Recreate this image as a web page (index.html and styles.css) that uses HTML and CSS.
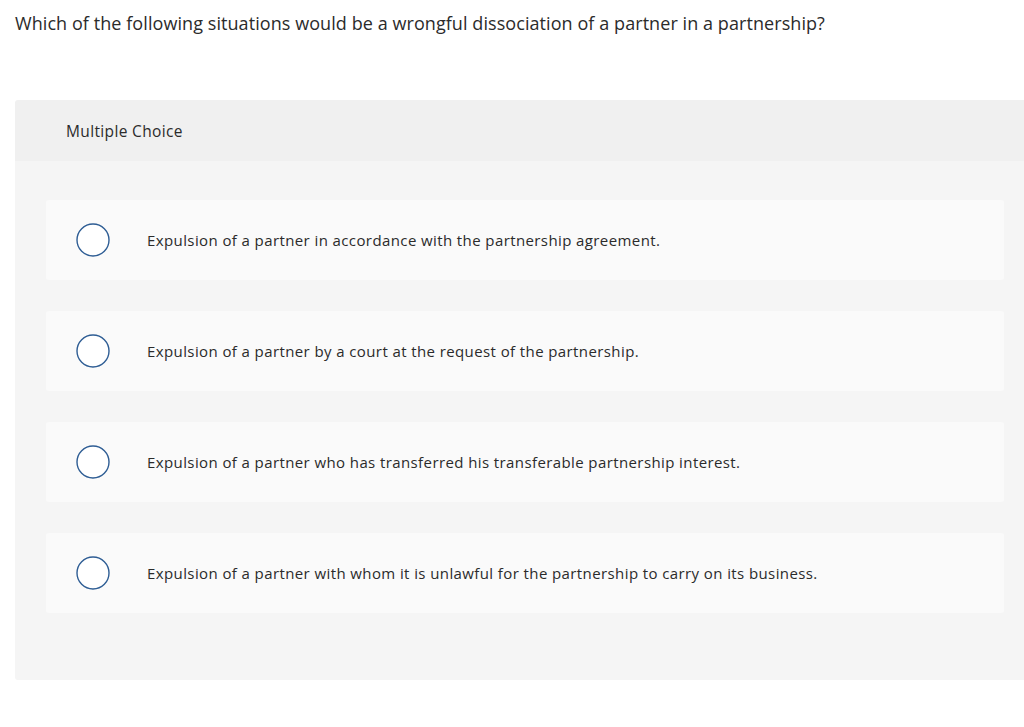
FILE: index.html
```html
<!DOCTYPE html>
<html>
<head>
<meta charset="utf-8">
<link rel="stylesheet" href="styles.css">
</head>
<body>
<div class="question">Which of the following situations would be a wrongful dissociation of a partner in a partnership?</div>
<div class="panel">
  <div class="panel-header">Multiple Choice</div>
  <div class="panel-body">
    <div class="option">
      <svg class="radio" width="34" height="34" viewBox="0 0 34 34"><circle cx="17" cy="17" r="16" fill="#fff" stroke="#2e5d94" stroke-width="1.4"/></svg>
      <span class="option-text">Expulsion of a partner in accordance with the partnership agreement.</span>
    </div>
    <div class="option">
      <svg class="radio" width="34" height="34" viewBox="0 0 34 34"><circle cx="17" cy="17" r="16" fill="#fff" stroke="#2e5d94" stroke-width="1.4"/></svg>
      <span class="option-text">Expulsion of a partner by a court at the request of the partnership.</span>
    </div>
    <div class="option">
      <svg class="radio" width="34" height="34" viewBox="0 0 34 34"><circle cx="17" cy="17" r="16" fill="#fff" stroke="#2e5d94" stroke-width="1.4"/></svg>
      <span class="option-text">Expulsion of a partner who has transferred his transferable partnership interest.</span>
    </div>
    <div class="option">
      <svg class="radio" width="34" height="34" viewBox="0 0 34 34"><circle cx="17" cy="17" r="16" fill="#fff" stroke="#2e5d94" stroke-width="1.4"/></svg>
      <span class="option-text">Expulsion of a partner with whom it is unlawful for the partnership to carry on its business.</span>
    </div>
  </div>
</div>
</body>
</html>
```
FILE: styles.css
```css
html, body {
  margin: 0;
  padding: 0;
  background: #fff;
}
body {
  font-family: "Open Sans", Lato, sans-serif;
  color: #2b2b2b;
  overflow: hidden;
}
.question {
  font-size: 18px;
  letter-spacing: 0.07px;
  line-height: 24px;
  padding: 11px 0 0 15px;
  height: 100px;
  box-sizing: border-box;
}
.panel {
  margin-left: 15px;
  width: 1020px;
  border-radius: 3px;
  overflow: hidden;
}
.panel-header {
  background: #f0f0f0;
  height: 61px;
  box-sizing: border-box;
  padding-left: 51px;
  display: flex;
  align-items: center;
  font-size: 15.5px;
  letter-spacing: 0.35px;
  padding-top: 1px;
}
.panel-body {
  background: #f5f5f5;
  padding: 39px 0 67px 31px;
  display: flex;
  flex-direction: column;
  gap: 31px;
}
.option {
  width: 958px;
  height: 80px;
  background: #fafafa;
  border-radius: 3px;
  display: flex;
  align-items: center;
  box-sizing: border-box;
  padding-left: 30px;
}
.radio {
  flex: none;
}
.option-text {
  margin-left: 37px;
  font-size: 15px;
  letter-spacing: 0.4px;
  color: #2b2b2b;
}
```
